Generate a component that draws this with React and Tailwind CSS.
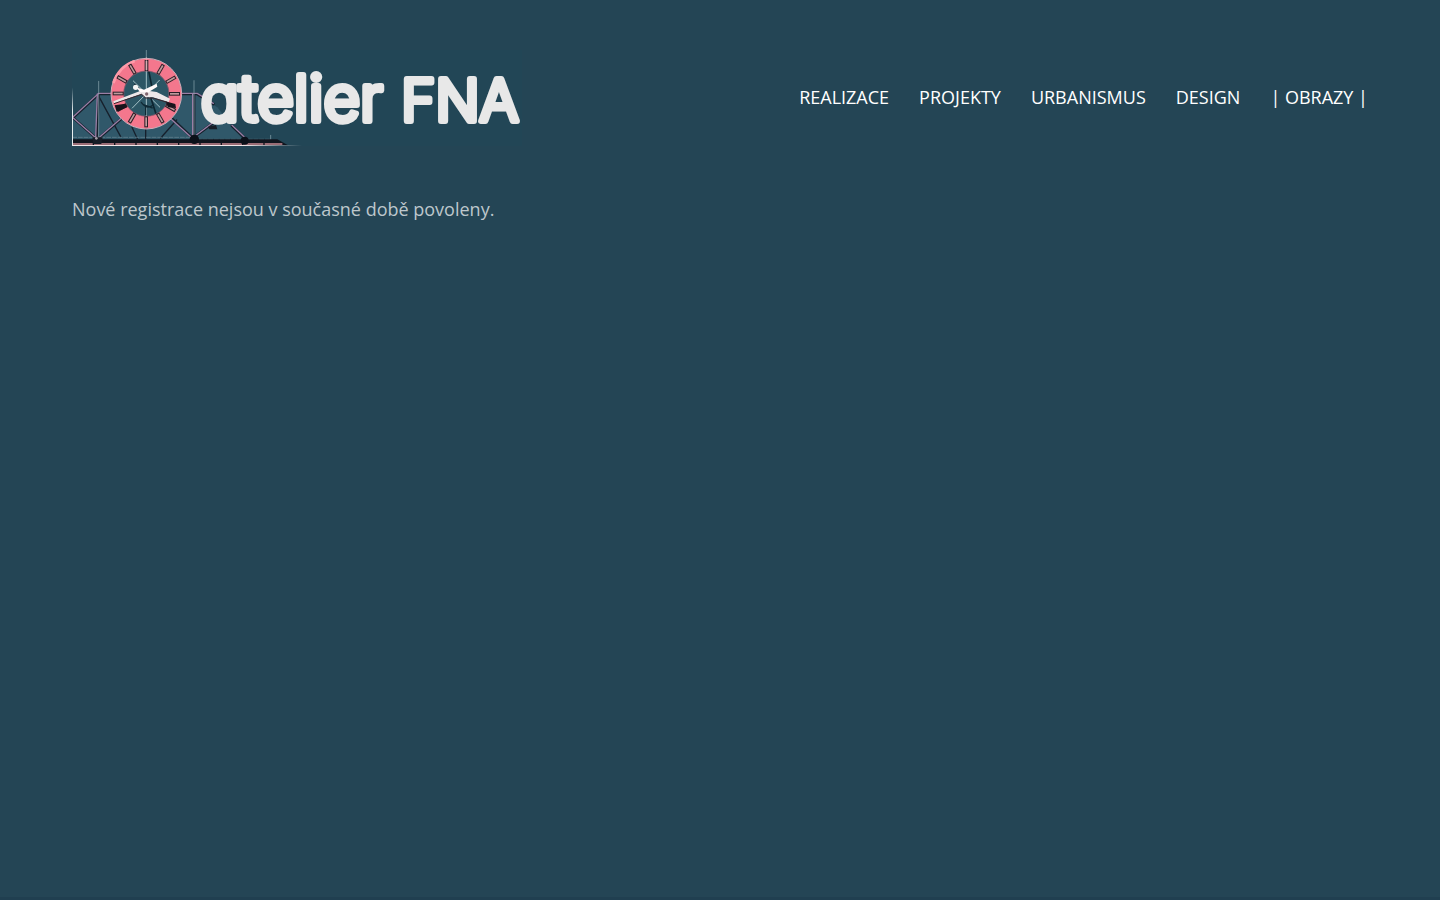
const links = [
  { label: 'REALIZACE', href: '#realizace' },
  { label: 'PROJEKTY', href: '#projekty' },
  { label: 'URBANISMUS', href: '#urbanismus' },
  { label: 'DESIGN', href: '#design' },
  { label: '| OBRAZY |', href: '#obrazy' },
]

// hour marks on the clock ring, centre at 247,149
const hours = [0, 30, 60, 90, 120, 150, 180, 210, 240, 270, 300, 330]

function Logo() {
  return (
    <svg viewBox="24 18 1350 288" className="block w-[450px] h-auto max-w-full" role="img" aria-label="atelier FNA">
      <defs>
        <linearGradient id="edge" x1="0" y1="0" x2="0" y2="1">
          <stop offset="0" stopColor="#e8eef0" stopOpacity="0" />
          <stop offset="0.4" stopColor="#e8eef0" />
        </linearGradient>
        <linearGradient id="ground" x1="0" y1="0" x2="1" y2="0">
          <stop offset="0.75" stopColor="#f0e6e8" />
          <stop offset="1" stopColor="#f0e6e8" stopOpacity="0" />
        </linearGradient>
      </defs>

      <rect x="24" y="18" width="1350" height="288" fill="#224656" />
      <path d="M24 222 L104 148 H388 L460 190 L535 284 H24 Z" fill="#30586a" />

      {/* Bridge */}
      <g fill="none" strokeLinecap="round">
        <g stroke="#16202c" strokeWidth="8">
          <path d="M26 222 L104 150 H145 M350 150 H400 L448 180 M504 246 L544 284" />
          <path d="M28 222 L98 284 M104 150 L98 284 M108 280 L172 224 M322 222 L388 284 M390 150 V284 M400 272 L446 238" />
          <path d="M106 160 L170 278 M245 245 V284 M338 228 L290 282 M204 250 L220 284" strokeWidth="4" />
        </g>
        <g stroke="#9a7fa6" strokeWidth="4">
          <path d="M26 220 L104 148 H145 M350 148 H400 L448 178 M504 244 L544 282" />
          <path d="M28 222 L96 282 M100 150 L95 282 M106 280 L170 224 M320 224 L384 282 M386 150 V282 M398 272 L446 236" />
        </g>
        <path d="M104 112 V280 M390 110 V280 M247 18 V70 M620 274 V290" stroke="#8faab4" strokeWidth="2" />
        <path d="M26 280 H380 M400 286 H620" stroke="#6d8794" strokeWidth="2" strokeDasharray="12 5" />
      </g>
      <path d="M26 286 H640 L672 304 H26 Z" fill="#10151e" />
      <path d="M26 300 H655" stroke="#c98a94" strokeWidth="4" strokeDasharray="60 4" />
      <path d="M85 280 H116 L112 300 H88 Z M432 248 L456 243 L460 256 H436 Z" fill="#171d27" />
      <circle cx="391" cy="286" r="14" fill="#0b1019" />
      <circle cx="542" cy="290" r="12" fill="#0b1019" />
      <circle cx="97" cy="283" r="4" fill="#a59ba6" />
      <rect x="24" y="130" width="3" height="176" fill="url(#edge)" />
      <rect x="24" y="303" width="690" height="3" fill="url(#ground)" />

      {/* Clock */}
      <circle cx="247" cy="149" r="70" fill="#2c5665" />
      <g fill="none">
        <path d="M247 80 V218 M207 110 L288 190 M287 108 L204 193" stroke="#a3c0c6" strokeWidth="3" />
        <path d="M254 80 L264 130 M212 120 L240 154 M260 160 L276 210" stroke="#0d2530" strokeWidth="5" />
        <path d="M231 174 Q248 200 270 181 M238 182 L266 192 M245 184 V214" stroke="#102934" strokeWidth="4" />
      </g>
      <circle cx="247" cy="149" r="87" fill="none" stroke="#f4778d" strokeWidth="37" />
      <circle cx="247" cy="149" r="106" fill="none" stroke="#cfaeb9" strokeWidth="3" />
      <circle cx="247" cy="149" r="68" fill="none" stroke="#a75c70" strokeWidth="2" />
      <path d="M148 117 A104 104 0 0 1 212 51" fill="none" stroke="#ff9aa9" strokeWidth="8" />
      {hours.map(a => (
        <g key={a} transform={`rotate(${a} 247 149)`}>
          <rect x="242" y="48" width="11" height="33" fill="#2b1e27" />
          <rect x="245" y="51" width="5" height="27" fill="#c09a9c" />
        </g>
      ))}
      <path d="M152 184 L184 179 L190 190 L158 203 Z M304 172 L334 180 L336 192 L312 190 Z" fill="#17131b" />
      <path d="M247 40 V80" stroke="#e9bbc4" strokeWidth="2" />
      <path d="M148 172 L236 138 L278 144 L318 164 L314 174 L266 160 L244 160 L232 150 L150 178 Z" fill="#ece7e8" />
      <path d="M216 130 L240 137 L278 119 L280 128 L253 145 L228 144 Z" fill="#fffafa" />
      <circle cx="215" cy="130" r="8" fill="#f3f5f5" />
      <path d="M150 179 L233 151 L245 162 L267 162 L310 175" fill="none" stroke="#39272f" strokeWidth="3" />
      <circle cx="248" cy="150" r="5" fill="#81656e" />

      {/* Wordmark */}
      <g
        className="font-['Inter',sans-serif] font-light [font-feature-settings:'cv11']"
        fill="#e8e8e8"
        stroke="#e8e8e8"
        strokeWidth="18"
        strokeLinejoin="round"
      >
        <text x="410" y="230" fontSize="190">atelier</text>
        <text x="1012" y="230" fontSize="174">FNA</text>
      </g>
    </svg>
  )
}

export default function App() {
  return (
    <div className="min-h-screen flex flex-col bg-[#244555] font-['Open_Sans',sans-serif] text-lg/[26px]">
      <header className="flex flex-wrap items-center justify-between gap-6 px-[72px] pt-[50px]">
        <a href="#home">
          <Logo />
        </a>
        <nav aria-label="Menu" className="pb-0.5">
          <ul className="flex flex-wrap gap-[30px] text-white">
            {links.map(link => (
              <li key={link.href}>
                <a href={link.href} className="hover:underline">{link.label}</a>
              </li>
            ))}
          </ul>
        </nav>
      </header>

      <main className="flex-1 px-[72px] pt-[50px]">
        <p className="text-[#bdc7cc]">Nové registrace nejsou v současné době povoleny.</p>
      </main>

      <footer className="h-[3px] bg-[#203f50]" />
    </div>
  )
}
